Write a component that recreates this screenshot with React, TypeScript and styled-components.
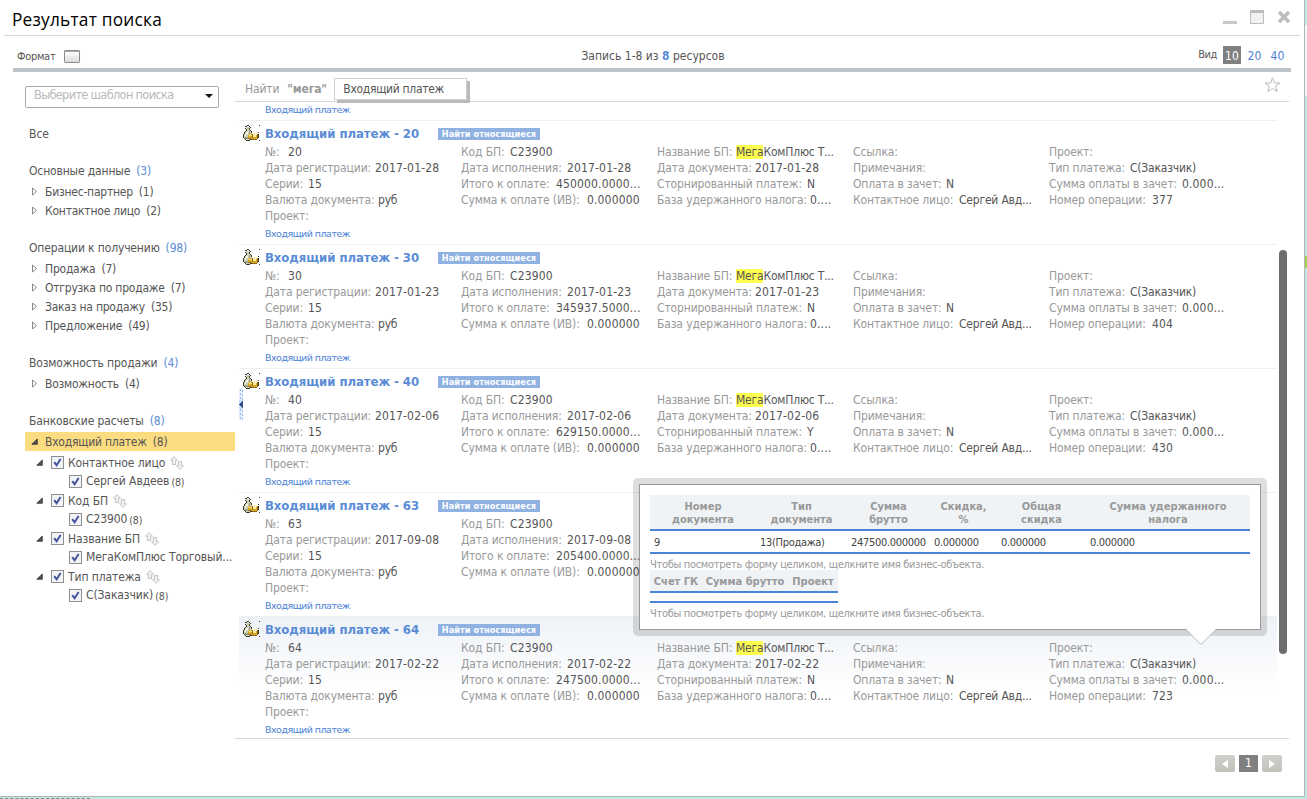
import React from "react";
import styled, { createGlobalStyle } from "styled-components";

const ui = `"DejaVu Sans Condensed", "DejaVu Sans", sans-serif`;

const Global = createGlobalStyle`
  html, body { margin: 0; padding: 0; height: 799px; overflow: hidden; }
  html { background: linear-gradient(#bdecec 25px, #f2f8f8 25px, #f2f8f8 96px, #c0e8e6 96px); }
  body { font-family: ${ui}; font-size: 12px; font-stretch: condensed; color: #555; }
  * { box-sizing: border-box; }
`;

const Window = styled.div`
  width: 1305px;
  height: 797px;
  background: #fff;
  border-right: 1px solid #b4b4b4;
  border-bottom: 1px solid #b4b4b4;
  display: flex;
  flex-direction: column;
  position: relative;
`;
const TitleBar = styled.header`
  height: 36px;
  margin: 0 4px;
  padding: 3px 9px 0 8px;
  border-bottom: 1px solid #d4d4d4;
  display: flex;
  justify-content: space-between;
`;
const Title = styled.h1`
  margin: 0;
  font: 17.3px/34px "Open Sans", "Noto Sans", sans-serif;
  letter-spacing: 0.22px;
  color: #000;
  white-space: nowrap;
`;
const WindowButtons = styled.div`
  display: flex;
  height: 28px;
  align-items: center;
`;
const Toolbar = styled.div`
  height: 36px;
  margin: 0 13px;
  border-bottom: 4px solid #bcc3cb;
  display: grid;
  grid-template-columns: 1fr 145px 1fr;
  align-items: center;
  padding: 7px 2px 0 4px;
  white-space: nowrap;
`;
const FormatLabel = styled.div`
  display: flex;
  align-items: center;
  gap: 9px;
  font-size: 11px;
  letter-spacing: -0.3px;
  padding-top: 1px;
`;
const RecordCount = styled.div`
  text-align: center;
  b { color: #5a8cd6; }
`;
const ViewSwitch = styled.div`
  display: flex;
  justify-content: flex-end;
  align-items: center;
  font-size: 11px;
  letter-spacing: -0.4px;
  margin-bottom: 2px;
`;
const ViewOption = styled.span<{ $on?: boolean }>`
  width: ${(p) => (p.$on ? 18 : 23)}px;
  height: 18px;
  line-height: 20px;
  font-size: 12px;
  letter-spacing: 0.1px;
  text-align: center;
  color: ${(p) => (p.$on ? "#fff" : "#4a7fd8")};
  background: ${(p) => (p.$on ? "#808080" : "transparent")};
  margin-left: ${(p) => (p.$on ? 6 : 0)}px;
  &:nth-child(3) { margin-left: 2px; }
`;
const Body = styled.div`
  display: flex;
  height: 667px;
`;
const Sidebar = styled.aside`
  width: 235px;
  padding: 14px 0 0 25px;
  white-space: nowrap;
`;
const TemplateSelect = styled.div`
  width: 194px;
  height: 22px;
  border: 1px solid #ababab;
  border-radius: 2px;
  padding: 0 5px 4px 8px;
  display: flex;
  align-items: center;
  justify-content: space-between;
  font: 11.4px "DejaVu Sans", sans-serif;
  letter-spacing: -0.68px;
  color: #b9b9b9;
  svg { position: relative; top: 1px; }
`;
const AllLink = styled.div`
  margin: 15px 0 0 4px;
  height: 20px;
  line-height: 22px;
`;
const Group = styled.section`
  padding-top: 18px;
`;
const GroupTitle = styled.div`
  height: 21px;
  line-height: 20px;
  padding-left: 4px;
  letter-spacing: -0.15px;
  span { color: #5a8cd6; margin-left: 6px; }
`;
const TreeRow = styled.div<{ $active?: boolean }>`
  height: 19px;
  line-height: 19px;
  padding: 1px 0 0 6px;
  display: flex;
  align-items: center;
  letter-spacing: -0.23px;
  background: ${(p) => (p.$active ? "#fcdc80" : "transparent")};
  svg { margin: -1px 6px 0 0; }
  span { margin-left: 6px; }
`;
const Facets = styled.div`
  padding-top: 2px;
`;
const FacetRow = styled.div<{ $child?: boolean }>`
  height: 19px;
  padding: ${(p) => (p.$child ? "0 0 1px 44px" : "0 0 0 11px")};
  display: flex;
  align-items: center;
  letter-spacing: ${(p) => (p.$child ? -0.1 : -0.1)}px;
  small { font-size: 10.5px; margin-left: 2px; padding-top: 1px; }
`;
const Box = styled.span`
  width: 13px;
  height: 13px;
  flex: none;
  margin: 0 4px 0 7px;
  border: 1px solid #8e8f8f;
  background: #f1f3f6;
  display: flex;
  align-items: center;
  justify-content: center;
`;
const ChildBox = styled(Box)`
  margin-left: 0;
`;
const Main = styled.main`
  width: 1054px;
  position: relative;
`;
const QueryBar = styled.div`
  height: 30px;
  border-bottom: 1px solid #d4d4d4;
  display: flex;
  align-items: center;
  padding: 4px 8px 0 10px;
  color: #999;
  letter-spacing: -0.15px;
  b { margin-left: 8px; width: 47px; }
`;
const Crumb = styled.div`
  width: 133px;
  height: 22px;
  line-height: 20px;
  padding-left: 8px;
  background: #fff;
  border: 1px solid #d0d0d0;
  box-shadow: 3px 3px 0 #bababa;
  color: #555;
  letter-spacing: -0.3px;
  white-space: nowrap;
`;
const Star = styled.svg`
  margin: -8px 0 0 auto;
`;
const List = styled.div`
  height: 637px;
  border-bottom: 1px solid #d4d4d4;
  padding-left: 4px;
  overflow: hidden;
`;
const FirstLink = styled.div`
  height: 18px;
  padding: 1px 0 0 26px;
`;
const TypeLink = styled.a`
  font: 9.5px/14px "DejaVu Sans", sans-serif;
  letter-spacing: -0.52px;
  color: #4a80d4;
  display: block;
`;
const Item = styled.article<{ $hover?: boolean }>`
  width: 1038px;
  height: 124px;
  border-top: 1px solid #efefef;
  padding: 3px 0 0 4px;
  display: grid;
  grid-template-columns: 22px 1fr;
  background: ${(p) => (p.$hover ? "linear-gradient(#eef2f7, #fff 75px)" : "none")};
`;
const ItemIcon = styled.svg`
  margin-top: 1px;
`;
const ItemHead = styled.div`
  height: 20px;
  padding-bottom: 2px;
  display: flex;
  align-items: center;
`;
const ItemTitle = styled.h2`
  margin: 0;
  width: 173px;
  font-size: 13px;
  letter-spacing: -0.05px;
  color: #5a8cd6;
  white-space: nowrap;
`;
const RelatedButton = styled.span`
  width: 102px;
  height: 12px;
  font: bold 9px/13px "DejaVu Sans Condensed", sans-serif;
  letter-spacing: 0.1px;
  text-align: center;
  color: #fff;
  background: #8fb2e3;
  white-space: nowrap;
  position: relative;
  top: 1px;
`;
const Fields = styled.div`
  display: grid;
  grid-template-columns: repeat(5, 196px);
  align-items: start;
`;
const Field = styled.div<{ $col: number }>`
  grid-column: ${(p) => p.$col};
  height: 16px;
  line-height: 17px;
  display: flex;
  white-space: nowrap;
`;
const Label = styled.span<{ $w: number }>`
  width: ${(p) => p.$w}px;
  flex: none;
  color: #999;
  letter-spacing: -0.13px;
`;
const Value = styled.span<{ $num: boolean }>`
  color: #555;
  letter-spacing: ${(p) => (p.$num ? 0.15 : -0.2)}px;
  mark { background: #ffff50; color: #555; }
`;
const ItemFoot = styled.div`
  padding-top: 3px;
`;
const Scrollbar = styled.div`
  position: absolute;
  left: 1044px;
  top: 178px;
  width: 8px;
  height: 404px;
  border-radius: 4px;
  background: #6e6e6e;
`;
const Splitter = styled.svg`
  position: absolute;
  left: 4px;
  top: 317px;
`;
const Popup = styled.div`
  position: absolute;
  left: 633px;
  top: 478px;
  width: 634px;
  height: 158px;
  padding: 6px;
  border-radius: 5px;
  background: rgba(0, 0, 0, 0.13);
`;
const PopupBody = styled.div`
  height: 146px;
  background: #fff;
  border: 1px solid #999;
  padding: 10px;
  font-size: 11px;
`;
const PopupArrow = styled.svg`
  position: absolute;
  left: 552px;
  top: 151px;
`;
const DocTable = styled.div<{ $cols: string }>`
  display: grid;
  grid-template-columns: ${(p) => p.$cols};
  width: max-content;
`;
const HeadCell = styled.div<{ $tall?: boolean }>`
  height: ${(p) => (p.$tall ? 36 : 23)}px;
  background: #eff3f6;
  border-bottom: 2px solid #4a86d8;
  padding-top: 5px;
  font-weight: bold;
  line-height: 13px;
  text-align: center;
  white-space: pre;
  color: #999;
`;
const DataCell = styled.div<{ $empty?: boolean }>`
  height: ${(p) => (p.$empty ? 10 : 23)}px;
  line-height: 23px;
  padding-left: 4px;
  letter-spacing: -0.3px;
  border-bottom: 2px solid #4a86d8;
  color: #444;
`;
const Hint = styled.div`
  height: 16px;
  padding-top: 3px;
  line-height: 15px;
  letter-spacing: -0.31px;
  color: #999;
  white-space: nowrap;
`;
const Pager = styled.nav`
  display: flex;
  justify-content: flex-end;
  gap: 4px;
  padding: 16px 22px 0 0;
`;
const PageButton = styled.span<{ $current?: boolean }>`
  width: ${(p) => (p.$current ? 19 : 20)}px;
  height: 17px;
  line-height: 17px;
  text-align: center;
  color: #fff;
  border-radius: ${(p) => (p.$current ? 0 : 2)}px;
  background: ${(p) => (p.$current ? "#808080" : "linear-gradient(#d0d0cc, #c2c2bb)")};
  display: flex;
  align-items: center;
  justify-content: center;
`;
const Marker = styled.div`
  position: absolute;
  left: 1305px;
  top: 256px;
  width: 2px;
  height: 12px;
  background: #a6cf4e;
`;
const Backdrop = styled.div`
  width: 90px;
  padding-top: 1px;
  border-bottom: 1px dashed #7f8c90;
`;
const SortIcon = styled.svg`
  margin-left: 5px;
`;

const Closed = () => (
  <svg width="8" height="9" viewBox="0 0 8 9">
    <path d="M1.5 1v7l4-3.5z" fill="#fff" stroke="#888" />
  </svg>
);
const Open = () => (
  <svg width="8" height="9" viewBox="0 0 8 9">
    <path d="M6.300 2v5.300H.800z" fill="#555" stroke="#222" strokeWidth=".7" />
  </svg>
);
const Check = () => (
  <svg width="9" height="9" viewBox="0 0 9 9">
    <path d="M1.2 4.2 3.6 7.2 7.6 1" fill="none" stroke="#44539b" strokeWidth="2" />
  </svg>
);
const Sort = () => (
  <SortIcon width="14" height="14" viewBox="0 0 14 14">
    <path d="M4 .7 7.500 4.200H5.700v4.300H2.300V4.200H.5zM10 13.300 6.500 9.800h1.800V5.500h3.400v4.300h1.800z" fill="#f1f1f1" stroke="#bdbdbd" strokeWidth=".9" />
  </SortIcon>
);
const MoneyBag = () => (
  <ItemIcon width="17" height="17" viewBox="0 0 17 17" shapeRendering="crispEdges">
    <path d="M3 2h4v3H4zM4 5h3l2 3v5l-2 2H3l-2-2v-3z" fill="#cdd0bb" />
    <path d="M2 1h2v1H2zM4 0h2v1H4zM6 1h1v1H6zM7 2h1v1H7zM6 3h1v2H6zM2 3h1v1H2zM3 4h1v2H3zM7 5h1v1H7zM8 6h1v2H8zM2 6h1v1H2zM1 7h1v2H1zM0 9h1v4H0zM1 13h1v1H1zM2 14h1v1H2zM3 15h4v1H3zM15 7h1v1h-1zM15 9h1v4h-1zM16 0h1v1h-1zM16 15h1v1h-1zM7 14h2v1H7z" fill="#3a3c22" />
    <path d="M3 7h2v2H3zM2 9h1v2H2z" fill="#f7f7ec" />
    <path d="M2 12h3v2H2zM6 6h1v3H6z" fill="#9fa283" />
    <path d="M6 9h3v1h5v4H8v-1H5v-3h1z" fill="#d9a92c" />
    <path d="M6 10h3v1H6zM10 10h3v2h-3zM10 8h4v1h-4z" fill="#ffe88a" />
    <path d="M9 9h1v4H9zM14 9h1v5h-1zM9 14h5v1H9zM5 13h3v1H5z" fill="#8a6a18" />
  </ItemIcon>
);

type Rec = { no: string; reg: string; due: string; sum: string; doc?: string; storno?: string; op?: string; hover?: boolean };
const records: Rec[] = [
  { no: "20", reg: "2017-01-28", due: "2017-01-28", sum: "450000.0000...", doc: "2017-01-28", storno: "N", op: "377" },
  { no: "30", reg: "2017-01-23", due: "2017-01-23", sum: "345937.5000...", doc: "2017-01-23", storno: "N", op: "404" },
  { no: "40", reg: "2017-02-06", due: "2017-02-06", sum: "629150.0000...", doc: "2017-02-06", storno: "Y", op: "430" },
  { no: "63", reg: "2017-09-08", due: "2017-09-08", sum: "205400.0000..." },
  { no: "64", reg: "2017-02-22", due: "2017-02-22", sum: "247500.0000...", doc: "2017-02-22", storno: "N", op: "723", hover: true },
];
// Label, label width and value, row by row across the five columns.
// Records without a document date only carry the first two columns.
const fieldsOf = (r: Rec): [string, number, React.ReactNode, number][] => {
  const all: [string, number, React.ReactNode][] = [
    ["№:", 23, r.no],
    ["Код БП:", 49, "C23900"],
    ["Название БП:", 79, <><mark>Мега</mark>КомПлюс Т...</>],
    ["Ссылка:", 50, ""],
    ["Проект:", 50, ""],
    ["Дата регистрации:", 110, r.reg],
    ["Дата исполнения:", 106, r.due],
    ["Дата документа:", 98, r.doc],
    ["Примечания:", 80, ""],
    ["Тип платежа:", 81, "С(Заказчик)"],
    ["Серии:", 43, "15"],
    ["Итого к оплате:", 95, r.sum],
    ["Сторнированный платеж:", 150, r.storno],
    ["Оплата в зачет:", 93, "N"],
    ["Сумма оплаты в зачет:", 133, "0.000..."],
    ["Валюта документа:", 113, "руб"],
    ["Сумма к оплате (ИВ):", 126, "0.000000"],
    ["База удержанного налога:", 153, "0...."],
    ["Контактное лицо:", 106, "Сергей Авд..."],
    ["Номер операции:", 103, r.op],
    ["Проект:", 50, ""],
  ];
  return all
    .map(([l, w, v], i): [string, number, React.ReactNode, number] => [l, w, v, (i % 5) + 1])
    .filter(([, , , col]) => r.doc || col <= 2);
};
const isNumeric = (v: React.ReactNode) => typeof v === "string" && /\d/.test(v);

const groups: { title: string; count: number; rows: [string, number][] }[] = [
  { title: "Основные данные", count: 3, rows: [["Бизнес-партнер", 1], ["Контактное лицо", 2]] },
  { title: "Операции к получению", count: 98, rows: [["Продажа", 7], ["Отгрузка по продаже", 7], ["Заказ на продажу", 35], ["Предложение", 49]] },
  { title: "Возможность продажи", count: 4, rows: [["Возможность", 4]] },
  { title: "Банковские расчеты", count: 8, rows: [["Входящий платеж", 8]] },
];
const facets: [string, string, string][] = [
  ["Контактное лицо", "Сергей Авдеев", "(8)"],
  ["Код БП", "C23900", "(8)"],
  ["Название БП", "МегаКомПлюс Торговый...", ""],
  ["Тип платежа", "С(Заказчик)", "(8)"],
];
const docHead = ["Номер\nдокумента", "Тип\nдокумента", "Сумма\nбрутто", "Скидка,\n%", "Общая\nскидка", "Сумма удержанного\nналога"];
const docRow = ["9", "13(Продажа)", "247500.000000", "0.000000", "0.000000", "0.000000"];
const hint = "Чтобы посмотреть форму целиком, щелкните имя бизнес-объекта.";

export default function App() {
  return (
    <>
      <Global />
      <Window>
        <TitleBar>
          <Title>Результат поиска</Title>
          <WindowButtons>
            <svg width="68" height="16" viewBox="0 0 68 16">
              <path d="M0 12h14v3H0z" fill="#c8c8c8" />
              <path d="M27.5 1.5h13v13h-13z" fill="#f1f1f1" stroke="#bdbdbd" />
              <path d="M27 1h14v3H27z" fill="#bdbdbd" />
              <path d="m56 3 10 10M66 3 56 13" stroke="#bdbdbd" strokeWidth="3.6" />
            </svg>
          </WindowButtons>
        </TitleBar>
        <Toolbar>
          <FormatLabel>
            Формат
            <svg width="17" height="13" viewBox="0 0 17 13">
              <defs>
                <linearGradient id="fmt" x2="0" y2="1"><stop stopColor="#fff" /><stop offset="1" stopColor="#dcdcdc" /></linearGradient>
              </defs>
              <rect x=".5" y=".5" width="15" height="12" rx=".6" fill="url(#fmt)" stroke="#8c8c8c" />
              <path d="M1 1.500h14" stroke="#aaa" />
            </svg>
          </FormatLabel>
          <RecordCount>Запись 1-8 из <b>8</b> ресурсов</RecordCount>
          <ViewSwitch>
            <span>Вид</span>
            <ViewOption $on>10</ViewOption>
            <ViewOption>20</ViewOption>
            <ViewOption>40</ViewOption>
          </ViewSwitch>
        </Toolbar>
        <Body>
          <Sidebar>
            <TemplateSelect>
              Выберите шаблон поиска
              <svg width="8" height="4" viewBox="0 0 8 4"><path d="M0 0h8L4 4z" fill="#111" /></svg>
            </TemplateSelect>
            <AllLink>Все</AllLink>
            {groups.map((g, i) => (
              <Group key={g.title}>
                <GroupTitle>{g.title}<span>({g.count})</span></GroupTitle>
                {g.rows.map(([name, n]) => (
                  <TreeRow key={name} $active={i === 3}>
                    {i === 3 ? <Open /> : <Closed />}
                    {name}<span>({n})</span>
                  </TreeRow>
                ))}
              </Group>
            ))}
            <Facets>
              {facets.map(([name, value, n]) => (
                <React.Fragment key={name}>
                  <FacetRow><Open /><Box><Check /></Box>{name}<Sort /></FacetRow>
                  <FacetRow $child><ChildBox><Check /></ChildBox>{value}<small>{n}</small></FacetRow>
                </React.Fragment>
              ))}
            </Facets>
          </Sidebar>
          <Main>
            <QueryBar>
              Найти <b>"мега"</b>
              <Crumb>Входящий платеж</Crumb>
              <Star width="17" height="16" viewBox="0 0 17 16">
                <path d="M8.500 .8 10.400 6h5.600l-4.400 3.300 1.600 5.400-4.700-3.300-4.700 3.300 1.600-5.400L1 6h5.600z" fill="none" stroke="#bbb" />
              </Star>
            </QueryBar>
            <List>
              <FirstLink><TypeLink>Входящий платеж</TypeLink></FirstLink>
              {records.map((r) => (
                <Item key={r.no} $hover={r.hover}>
                  <MoneyBag />
                  <div>
                    <ItemHead>
                      <ItemTitle>Входящий платеж - {r.no}</ItemTitle>
                      <RelatedButton>Найти относящиеся</RelatedButton>
                    </ItemHead>
                    <Fields>
                      {fieldsOf(r).map(([label, w, value, col], i) => (
                        <Field key={i} $col={col}>
                          <Label $w={w}>{label}</Label>
                          <Value $num={isNumeric(value)}>{value}</Value>
                        </Field>
                      ))}
                    </Fields>
                    <ItemFoot><TypeLink>Входящий платеж</TypeLink></ItemFoot>
                  </div>
                </Item>
              ))}
            </List>
            <Splitter width="4" height="31" viewBox="0 0 4 31" shapeRendering="crispEdges">
              <path d="M0 0h4v31H0z" fill="#e4edff" />
              <path d="M1 0v31M3 1v31" stroke="#a3bbf0" strokeDasharray="2 2" />
              <path d="M0 11h4v9H0z" fill="#c9dafa" />
              <path d="M4 12v7L0 15.500z" fill="#2f4f86" />
            </Splitter>
            <Scrollbar />
          </Main>
        </Body>
        <Pager>
          <PageButton><svg width="6" height="8"><path d="M6 0v8L0 4z" fill="#fff" /></svg></PageButton>
          <PageButton $current>1</PageButton>
          <PageButton><svg width="6" height="8"><path d="M0 0v8l6-4z" fill="#fff" /></svg></PageButton>
        </Pager>
        <Popup>
          <PopupBody>
            <DocTable $cols="106px 91px 83px 67px 89px 164px">
              {docHead.map((h) => <HeadCell key={h} $tall>{h}</HeadCell>)}
              {docRow.map((d, i) => <DataCell key={i}>{d}</DataCell>)}
            </DocTable>
            <Hint>{hint}</Hint>
            <DocTable $cols="52px 86px 50px">
              {["Счет ГК", "Сумма брутто", "Проект"].map((h) => <HeadCell key={h}>{h}</HeadCell>)}
              {[0, 1, 2].map((i) => <DataCell key={i} $empty />)}
            </DocTable>
            <Hint>{hint}</Hint>
          </PopupBody>
          <PopupArrow width="32" height="17" viewBox="0 0 32 17">
            <path d="M1 0h30L16 15.500z" fill="#fff" />
            <path d="M1 .5 16 15.500 31 .5" fill="none" stroke="#bbb" />
          </PopupArrow>
        </Popup>
        <Marker />
      </Window>
      <Backdrop />
    </>
  );
}
